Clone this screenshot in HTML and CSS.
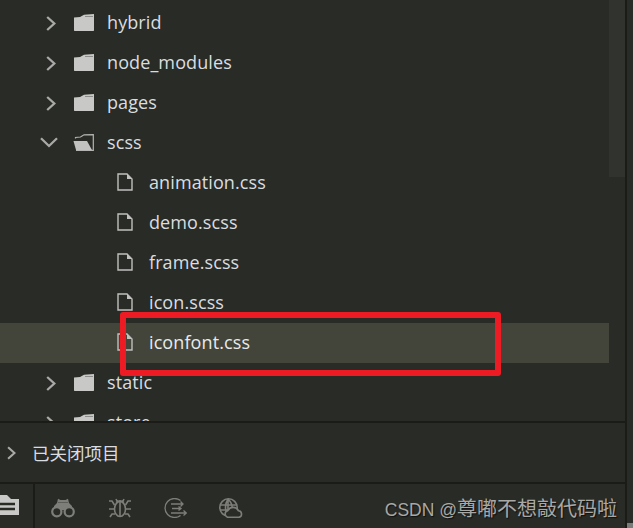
FILE: index.html
```html
<!DOCTYPE html>
<html lang="zh">
<head>
<meta charset="utf-8">
<title>Explorer</title>
<link rel="stylesheet" href="styles.css">
</head>
<body>
<svg class="defs" width="0" height="0" aria-hidden="true">
  <symbol id="chev" viewBox="0 0 10 15"><path d="M1.200 1 8.300 7.500 1.200 14" fill="none" stroke="#a9a9a7" stroke-width="2.300"/></symbol>
  <symbol id="chev-down" viewBox="0 0 18 11"><path d="M1 1.200 9 9 17 1.200" fill="none" stroke="#a9a9a7" stroke-width="2.300"/></symbol>
  <symbol id="folder" viewBox="0 0 20 17"><path d="M0 3.500 6 3 10 .7 20 0V16.500L19.500 17H.5L0 16.500Z" fill="#c8c8c6"/><path d="M11 2.500H19" stroke="#8c8c8a" stroke-width="1"/></symbol>
  <symbol id="folder-open" viewBox="0 0 21 17"><path d="M2.500 4.500V3.500L7.500 3 11 .8 20.300.6V16.400H3" fill="none" stroke="#b4b4b2" stroke-width="1.200"/><path d="M.5 7H14L19 16H3Z" fill="#c2c2c0"/></symbol>
  <symbol id="file" viewBox="0 0 16 18"><path d="M1 1H10L15 6V17H1Z" fill="none" stroke="#c0c0be" stroke-width="1.400"/><path d="M10 1 15 6H10Z" fill="#c0c0be"/></symbol>
</svg>
<main class="app">
  <section class="tree">
    <ul class="tree-list">
      <li class="row dir"><svg class="chev"><use href="#chev"/></svg><svg class="folder"><use href="#folder"/></svg><span>hybrid</span></li>
      <li class="row dir"><svg class="chev"><use href="#chev"/></svg><svg class="folder"><use href="#folder"/></svg><span>node_modules</span></li>
      <li class="row dir"><svg class="chev"><use href="#chev"/></svg><svg class="folder"><use href="#folder"/></svg><span>pages</span></li>
      <li class="row dir open"><svg class="chev-down"><use href="#chev-down"/></svg><svg class="folder"><use href="#folder-open"/></svg><span>scss</span></li>
      <li class="row file"><svg class="file-icon"><use href="#file"/></svg><span>animation.css</span></li>
      <li class="row file"><svg class="file-icon"><use href="#file"/></svg><span>demo.scss</span></li>
      <li class="row file"><svg class="file-icon"><use href="#file"/></svg><span>frame.scss</span></li>
      <li class="row file"><svg class="file-icon"><use href="#file"/></svg><span>icon.scss</span></li>
      <li class="row file selected"><svg class="file-icon"><use href="#file"/></svg><span>iconfont.css</span></li>
      <li class="row dir"><svg class="chev"><use href="#chev"/></svg><svg class="folder"><use href="#folder"/></svg><span>static</span></li>
      <li class="row dir"><svg class="chev"><use href="#chev"/></svg><svg class="folder"><use href="#folder"/></svg><span>store</span></li>
    </ul>
    <div class="scrollbar"></div>
  </section>
  <section class="closed">
    <svg class="chev-small"><use href="#chev"/></svg>
    <span>已关闭项目</span>
  </section>
  <footer class="toolbar">
    <div class="tool-left">
      <svg class="list-folder" viewBox="0 0 20 20"><path d="M-2 0H7L11 4H19V20H-2Z" fill="#c8c8c6"/><path d="M0 9H15M0 14H15" stroke="#292b26" stroke-width="2.400"/></svg>
    </div>
    <div class="tools">
      <svg class="tool binoculars" viewBox="0 0 24 20"><path d="M6 5 7 .8 9.500 2H14.500L17 .8 18 5 21 8H3Z" fill="#7d7e7a"/><path d="M7 4.500H17" stroke="#5d5e5a" stroke-width="1"/><path d="M3 8H21V13H14.500Q12 11 9.500 13H3Z" fill="#7d7e7a"/><circle cx="5.800" cy="13.800" r="4.600" fill="#292b26" stroke="#7d7e7a" stroke-width="2.200"/><circle cx="18.200" cy="13.800" r="4.600" fill="#292b26" stroke="#7d7e7a" stroke-width="2.200"/></svg>
      <svg class="tool bug" viewBox="0 0 22 20" fill="none" stroke="#7d7e7a" stroke-width="1.600"><ellipse cx="11" cy="11" rx="5.500" ry="7.500"/><path d="M7 4.500Q11 1 15 4.500M11 4V18.500M7 1 8.500 4M15 1 13.500 4M0 3 3 3 5.500 7M22 3 19 3 16.500 7M0 11H5.500M22 11H16.500M1 19 3 16H6M21 19 19 16H16"/></svg>
      <svg class="tool share" viewBox="0 0 24 20" fill="none" stroke="#7d7e7a" stroke-width="1.300"><path d="M17.500 2.600A9.500 9.500 0 1 0 17.500 17.400"/><path d="M8 6H20M17.500 3.500 20 6 17.500 8.500M9 10.500H18M15.500 8.500 18 10.500 15.500 12.500M8 15H23.300M20.500 12.500 23.300 15 20.500 17.500"/></svg>
      <svg class="tool globe" viewBox="0 0 24 20"><circle cx="9.500" cy="9.500" r="8.700" fill="none" stroke="#7d7e7a" stroke-width="1.600"/><path d="M1 7H18M1 12H12M9 1V18M9 1Q4 9 9 18M9 1Q14 6 13 11" fill="none" stroke="#7d7e7a" stroke-width="1.600"/><path d="M8.500 19.300A3.500 3.500 0 0 1 8.800 12.600 6 6 0 0 1 19.500 12.800 3.300 3.300 0 0 1 20 19.300Z" fill="#292b26" stroke="#7d7e7a" stroke-width="1.600"/></svg>
    </div>
    <div class="watermark"><span class="watermark-latin">CSDN @</span>尊嘟不想敲代码啦</div>
  </footer>
  <div class="gutter"></div>
  <div class="edge"><div class="edge-thumb"></div></div>
</main>
<div class="highlight"></div>
</body>
</html>
```
FILE: styles.css
```css
* { box-sizing: border-box; }
html, body { margin: 0; height: 100%; }
body {
  width: 633px;
  height: 528px;
  overflow: hidden;
  background: #292b26;
  font-family: "Open Sans", "Noto Sans CJK SC", sans-serif;
  font-size: 18px;
  color: #d9dde0;
  position: relative;
}
.defs { position: absolute; }
.app {
  display: grid;
  grid-template-columns: 625px 2px 6px;
  grid-template-rows: 421px 63px 44px;
  height: 528px;
}
.tree {
  grid-column: 1; grid-row: 1;
  display: flex;
  overflow: hidden;
}
.tree-list {
  list-style: none;
  margin: 3px 0 0;
  padding: 0;
  width: 609px;
  flex: none;
}
.scrollbar {
  width: 16px;
  height: 177px;
  background: #31332e;
  flex: none;
}
.row {
  display: flex;
  align-items: center;
  height: 40px;
  padding-bottom: 2px;
  white-space: nowrap;
  letter-spacing: .1px;
}
.row.selected { background: #43443a; color: #e8eaeb; }
.row.dir { padding-left: 46px; }
.row.file { padding-left: 117px; }
.chev { width: 10px; height: 15px; flex: none; margin: 3px 18px 0 0; }
.chev-down { width: 18px; height: 11px; flex: none; margin: 0 16px 0 -6px; }
.folder { width: 20px; height: 17px; flex: none; margin: 1px 13px 0 0; }
.open .folder { width: 21px; margin-left: -1px; }
.file-icon { width: 16px; height: 18px; flex: none; margin-right: 16px; }
.closed {
  grid-column: 1; grid-row: 2;
  display: flex;
  align-items: center;
  border-top: 2px solid #1b1c18;
  border-bottom: 2px solid #1b1c18;
  padding-left: 7px;
  font-size: 17.5px;
}
.chev-small { width: 9px; height: 14px; flex: none; margin-right: 16px; }
.toolbar {
  grid-column: 1; grid-row: 3;
  display: flex;
  align-items: center;
  overflow: hidden;
}
.tool-left {
  width: 35px;
  height: 100%;
  flex: none;
  border-right: 2px solid #1b1c18;
  padding-top: 11px;
}
.list-folder { display: block; width: 20px; height: 20px; }
.tools { display: flex; align-items: center; flex: none; margin-left: 16px; padding-top: 3px; }
.tool { display: block; height: 20px; flex: none; }
.binoculars { width: 24px; margin-right: 34px; }
.bug { width: 22px; margin-right: 32px; }
.share { width: 24px; margin-right: 32px; }
.globe { width: 24px; }
.watermark {
  margin-left: auto;
  margin-right: 8px;
  padding-top: 3px;
  color: #a8a9a6;
  font-family: "Liberation Sans", "Noto Sans CJK SC", sans-serif;
  font-size: 20px;
  text-shadow: 1px 1px 1px #111;
  white-space: nowrap;
}
.watermark-latin { font-size: 17.5px; }
.gutter {
  grid-column: 2; grid-row: 1 / 4;
  background: #1b1c18;
}
.edge {
  grid-column: 3; grid-row: 1 / 4;
  display: flex;
  align-items: flex-end;
}
.edge-thumb { width: 100%; height: 5px; background: #7b7c79; }
.highlight {
  position: absolute;
  left: 120px;
  top: 312px;
  width: 381px;
  height: 64px;
  border: 6px solid #ed1c24;
  border-radius: 3px;
}
```
